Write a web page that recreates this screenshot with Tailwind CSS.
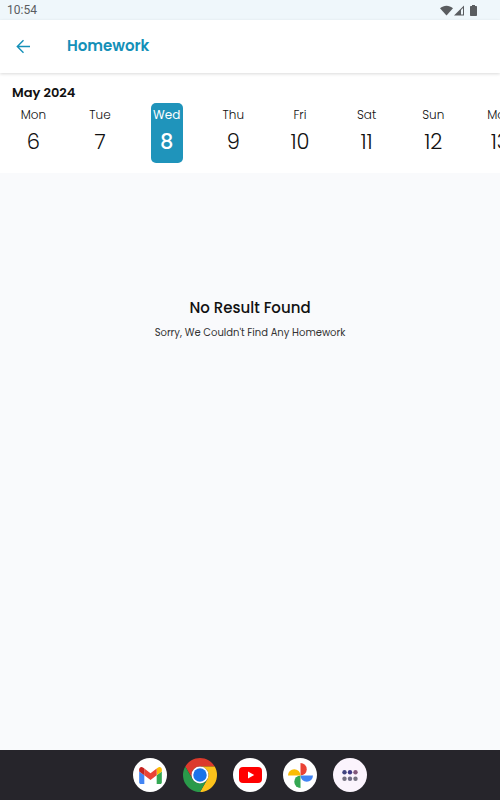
<!DOCTYPE html>
<html lang="en">
<head>
  <meta charset="UTF-8" />
  <meta name="viewport" content="width=device-width, initial-scale=1.0"/>
  <title>Homework</title>
  <script src="https://cdn.jsdelivr.net/npm/@tailwindcss/browser@4"></script>
</head>
<body class="bg-[#f9fafc] font-['Poppins','Inter',sans-serif] text-[#111111]">
  <div class="flex flex-col min-h-screen">

    <!-- Status bar -->
    <div class="flex items-center justify-between h-5 pl-[7px] pr-[23px] bg-[#eff7fb] text-[#5a5d60]">
      <span class="font-[Roboto] text-[12px] leading-5">10:54</span>
      <div class="flex items-center gap-px">
        <svg class="w-[13px] h-[11px]" viewBox="0 0 13 11" fill="currentColor"><path d="M6.5 10.6 0 3.2C3.6-.2 9.400-.2 13 3.200z"/></svg>
        <svg class="w-[10px] h-[11px]" viewBox="0 0 10 11"><path d="M0 10.500 10 .5V10.500z" fill="currentColor"/><path d="M7 5 9 3V9.500h-2z" fill="#eff7fb"/></svg>
        <svg class="w-[7px] h-[11px] ml-[5px]" viewBox="0 0 7 11" fill="currentColor"><path d="M2 0h3v1h1.300q.7 0 .7.7v8.600q0 .7-.7.7H.700q-.7 0-.7-.7V1.700q0-.7.7-.7H2z"/></svg>
      </div>
    </div>

    <!-- Header -->
    <header class="relative z-10 flex items-center h-[53px] px-4 gap-9 bg-white text-[#1490b8] shadow-[0_1px_3px_rgba(0,0,0,0.15)]">
      <button type="button" aria-label="Back" class="w-[15px] h-[15px]">
        <svg class="w-[15px] h-[15px]" viewBox="0 0 15 15" fill="none" stroke="currentColor" stroke-width="1.4"><path d="M14 7.500H1.500M7.500 1.300 1.300 7.500l6.200 6.200"/></svg>
      </button>
      <h1 class="text-[15px] leading-5 font-semibold -mt-0.5">Homework</h1>
    </header>

    <!-- Week strip -->
    <section class="h-[100px] pt-[10px] bg-white">
      <h2 class="pl-3 text-[13px] leading-5 font-semibold">May 2024</h2>
      <div class="flex overflow-hidden">
        <button type="button" class="flex justify-center shrink-0 w-2/15"><span class="flex flex-col items-center h-[60px] pt-1"><span class="text-[12px] leading-4 font-light">Mon</span><span class="mt-1 text-[21px] leading-[30px] font-light">6</span></span></button>
        <button type="button" class="flex justify-center shrink-0 w-2/15"><span class="flex flex-col items-center h-[60px] pt-1"><span class="text-[12px] leading-4 font-light">Tue</span><span class="mt-1 text-[21px] leading-[30px] font-light">7</span></span></button>
        <button type="button" aria-pressed="true" class="flex justify-center shrink-0 w-2/15"><span class="flex flex-col items-center w-8 h-[60px] pt-1 rounded-[5px] bg-[#1f94bb] text-white"><span class="text-[12px] leading-4">Wed</span><span class="mt-1 text-[21px] leading-[30px] font-medium">8</span></span></button>
        <button type="button" class="flex justify-center shrink-0 w-2/15"><span class="flex flex-col items-center h-[60px] pt-1"><span class="text-[12px] leading-4 font-light">Thu</span><span class="mt-1 text-[21px] leading-[30px] font-light">9</span></span></button>
        <button type="button" class="flex justify-center shrink-0 w-2/15"><span class="flex flex-col items-center h-[60px] pt-1"><span class="text-[12px] leading-4 font-light">Fri</span><span class="mt-1 text-[21px] leading-[30px] font-light">10</span></span></button>
        <button type="button" class="flex justify-center shrink-0 w-2/15"><span class="flex flex-col items-center h-[60px] pt-1"><span class="text-[12px] leading-4 font-light">Sat</span><span class="mt-1 text-[21px] leading-[30px] font-light">11</span></span></button>
        <button type="button" class="flex justify-center shrink-0 w-2/15"><span class="flex flex-col items-center h-[60px] pt-1"><span class="text-[12px] leading-4 font-light">Sun</span><span class="mt-1 text-[21px] leading-[30px] font-light">12</span></span></button>
        <button type="button" class="flex justify-center shrink-0 w-2/15"><span class="flex flex-col items-center h-[60px] pt-1"><span class="text-[12px] leading-4 font-light">Mon</span><span class="mt-1 text-[21px] leading-[30px] font-light">13</span></span></button>
      </div>
    </section>

    <!-- Empty state -->
    <main class="flex-1 pt-[123px] text-center">
      <p class="text-[15px] leading-6 font-medium">No Result Found</p>
      <p class="mt-[5px] text-[10px] leading-4 text-[#333333]">Sorry, We Couldn't Find Any Homework</p>
    </main>

    <!-- Taskbar -->
    <nav class="flex items-center justify-center gap-4 h-[50px] bg-[#26252b]">
      <button type="button" aria-label="Gmail" class="flex items-center justify-center size-[34px] rounded-full bg-white">
        <svg class="w-[23px] h-[17px]" viewBox="52 42 88 66">
          <path fill="#4285f4" d="M58 108h14V74L52 59v43c0 3.320 2.690 6 6 6"/>
          <path fill="#34a853" d="M120 108h14c3.320 0 6-2.690 6-6V59l-20 15"/>
          <path fill="#fbbc04" d="M120 48v26l20-15v-8c0-7.420-8.470-11.650-14.400-7.200"/>
          <path fill="#ea4335" d="M72 74V48l24 18 24-18v26L96 92"/>
          <path fill="#c5221f" d="M52 51v8l20 15V48l-5.600-4.200c-5.940-4.450-14.400-.220-14.400 7.200"/>
        </svg>
      </button>
      <button type="button" aria-label="Chrome" class="size-[34px] rounded-full">
        <svg class="size-[34px]" viewBox="0 0 48 48">
          <path fill="#dc3a2c" d="M3.220 12A24 24 0 0 1 44.780 12H24A12 12 0 0 0 13.610 30z"/>
          <path fill="#fcc21b" d="M44.780 12A24 24 0 0 1 24 48L34.390 30A12 12 0 0 0 24 12z"/>
          <path fill="#2a9a4a" d="M24 48A24 24 0 0 1 3.220 12L13.610 30A12 12 0 0 0 34.390 30z"/>
          <circle cx="24" cy="24" r="12" fill="#fff"/>
          <circle cx="24" cy="24" r="9.500" fill="#1a73e8"/>
        </svg>
      </button>
      <button type="button" aria-label="YouTube" class="flex items-center justify-center size-[34px] rounded-full bg-white">
        <svg class="w-[23px] h-[16px]" viewBox="0 0 23 16"><rect width="23" height="16" rx="4" fill="#f00"/><path d="M9 4.600v6.800L15.200 8z" fill="#fff"/></svg>
      </button>
      <button type="button" aria-label="Photos" class="flex items-center justify-center size-[34px] rounded-full bg-white">
        <svg class="size-[25px]" viewBox="0 0 24 24">
          <path fill="#ea4335" d="M12 0a6 6 0 0 1 0 12z"/>
          <path fill="#4285f4" d="M24 12a6 6 0 0 1-12 0z"/>
          <path fill="#34a853" d="M12 24a6 6 0 0 1 0-12z"/>
          <path fill="#fbbc04" d="M0 12a6 6 0 0 1 12 0z"/>
        </svg>
      </button>
      <button type="button" aria-label="All apps" class="flex items-center justify-center size-[34px] rounded-full bg-[#fbf4fd]">
        <svg class="w-4 h-[11px]" viewBox="0 0 16 11">
          <circle cx="2.500" cy="2.200" r="2.200" fill="#41457f"/><circle cx="8" cy="2.200" r="2.200" fill="#3f3a85"/><circle cx="13.500" cy="2.200" r="2.200" fill="#82587a"/>
          <circle cx="2.500" cy="8.700" r="2.200" fill="#74717f"/><circle cx="8" cy="8.700" r="2.200" fill="#706d85"/><circle cx="13.500" cy="8.700" r="2.200" fill="#74717f"/>
        </svg>
      </button>
    </nav>
  </div>
</body>
</html>
